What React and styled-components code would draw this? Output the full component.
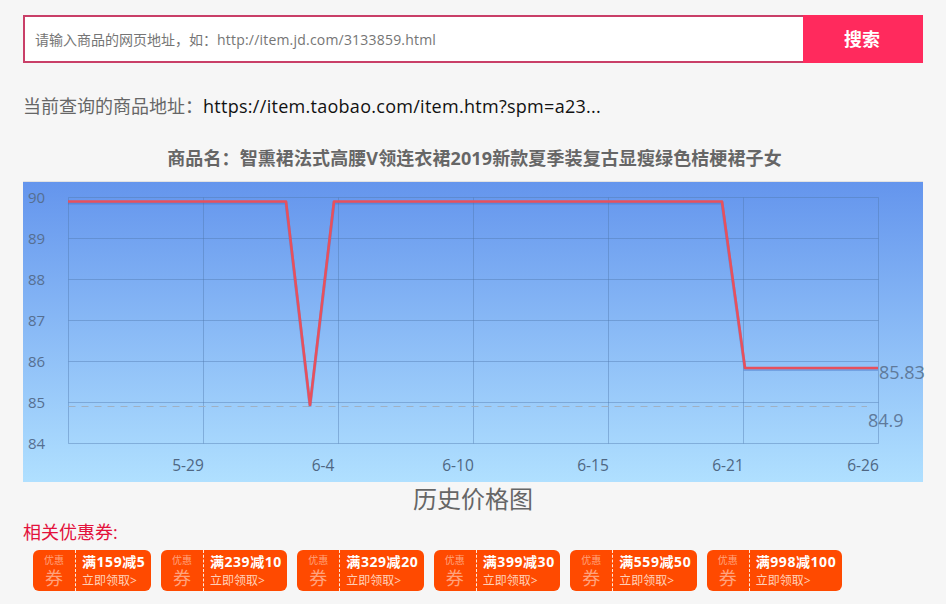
import React from 'react';
import styled, { createGlobalStyle } from 'styled-components';

const FONT = '"Open Sans", "Noto Sans CJK SC", sans-serif';

const GlobalStyle = createGlobalStyle`
  html, body {
    margin: 0;
    padding: 0;
    background: #f6f6f6;
    font-family: ${FONT};
  }
`;

const Page = styled.div`
  width: 900px;
  height: 589px;
  padding: 15px 23px 0;
  overflow: hidden;
`;

const SearchBar = styled.div`
  display: flex;
  height: 48px;
`;

const SearchInput = styled.div`
  flex: 1;
  display: flex;
  align-items: center;
  padding: 0 0 1px 10px;
  background: #fff;
  border: 2px solid #c93f68;
  border-right: none;
  font-size: 14px;
  color: #757575;
`;

const InputUrl = styled.span`
  letter-spacing: 0.2px;
`;

const SearchButton = styled.button`
  width: 120px;
  border: none;
  padding: 0 2px 2px 0;
  background: #ff2a5d;
  color: #fff;
  font-family: ${FONT};
  font-size: 18px;
  font-weight: 700;
`;

const AddressRow = styled.div`
  margin-top: 30px;
  height: 26px;
  line-height: 26px;
  font-size: 18px;
  color: #666;
  white-space: nowrap;
`;

const AddressLink = styled.span`
  color: #111;
  letter-spacing: 0.28px;
`;

const ProductName = styled.h1`
  margin: 27px 0 0;
  padding-left: 3px;
  height: 25px;
  line-height: 25px;
  text-align: center;
  font-size: 18px;
  font-weight: 700;
  letter-spacing: 0.1px;
  color: #666;
  white-space: nowrap;
`;

const ChartBox = styled.div`
  margin-top: 10px;
  height: 300px;
  border-top: 1px solid #e2e2e2;
  background: linear-gradient(#6495ed, #b0e0ff);
`;

const ChartSvg = styled.svg`
  display: block;
  overflow: visible;
`;

const ChartCaption = styled.div`
  height: 38px;
  line-height: 34px;
  text-align: center;
  font-size: 24px;
  color: #666;
`;

const CouponTitle = styled.div`
  height: 24px;
  line-height: 25px;
  font-size: 18px;
  color: #e3123c;
`;

const CouponList = styled.div`
  display: flex;
  gap: 10px;
  margin-top: 6px;
  padding-left: 10px;
`;

const Coupon = styled.div`
  display: flex;
  height: 41px;
  border-radius: 6px;
  background: #ff4a00;
  color: #fff;
`;

const CouponLeft = styled.div`
  width: 42px;
  flex: none;
  border-right: 1px dashed #ffe9dc;
  text-align: center;
  color: #ffa27c;
`;

const CouponSmall = styled.div`
  font-size: 10px;
  line-height: 12px;
  margin-top: 4px;
`;

const CouponBig = styled.div`
  font-size: 18px;
  line-height: 24px;
`;

const CouponRight = styled.div`
  padding: 2px 5.5px 0 6px;
  white-space: nowrap;
`;

const CouponAmount = styled.div`
  font-size: 14px;
  font-weight: 700;
  letter-spacing: 0.56px;
  line-height: 20px;
`;

const CouponAction = styled.div`
  font-size: 12px;
  line-height: 17px;
  color: #ffd0b8;
`;

const coupons = ['满159减5', '满239减10', '满329减20', '满399减30', '满559减50', '满998减100'];

// plot area, in chart coordinates
const LEFT = 45.5;
const RIGHT = 855.5;
const TOP = 15.5;
const BOTTOM = 261.5;
const rowYs = [0, 1, 2, 3, 4, 5, 6].map((i) => TOP + i * 41);
const colXs = [0, 1, 2, 3, 4, 5, 6].map((i) => LEFT + i * 135);
const yLabels = ['90', '89', '88', '87', '86', '85', '84'];
const xLabels = ['5-29', '6-4', '6-10', '6-15', '6-21', '6-26'];
const line = '45,19.5 263,19.5 287,223 311,19.5 699,19.5 722,186 855,186';

function PriceChart() {
  return (
    <ChartSvg width="900" height="300" viewBox="0 0 900 300" fontFamily={FONT}>
      <g stroke="#4f78ab" strokeOpacity="0.42" strokeWidth="1">
        {rowYs.map((y) => (
          <line key={y} x1={LEFT} x2={RIGHT} y1={y} y2={y} />
        ))}
        {colXs.map((x) => (
          <line key={x} x1={x} x2={x} y1={TOP} y2={BOTTOM} />
        ))}
      </g>
      <line x1={LEFT} x2={844} y1="224.5" y2="224.5" stroke="#9fb0c2" strokeDasharray="7 6" />
      <polyline points={line} fill="none" stroke="#3f6fc0" strokeOpacity="0.4" strokeWidth="3" transform="translate(0 1.5)" />
      <polyline points={line} fill="none" stroke="#e8505c" strokeWidth="2.6" strokeLinejoin="round" />
      <g fill="#566f91" fontSize="15">
        {yLabels.map((t, i) => (
          <text key={t} x="5" y={rowYs[i] + 5.5}>{t}</text>
        ))}
      </g>
      <g fill="#4f6783" fontSize="15.5" textAnchor="middle">
        {xLabels.map((t, i) => (
          <text key={t} x={colXs[i + 1] - 15.5} y="289">{t}</text>
        ))}
      </g>
      <g fill="#5f7a9b" fontSize="18">
        <text x="856" y="197">85.83</text>
        <text x="845" y="245">84.9</text>
      </g>
    </ChartSvg>
  );
}

export default function App() {
  return (
    <Page>
      <GlobalStyle />
      <SearchBar>
        <SearchInput>
          <span>请输入商品的网页地址，如：<InputUrl>http://item.jd.com/3133859.html</InputUrl></span>
        </SearchInput>
        <SearchButton>搜索</SearchButton>
      </SearchBar>
      <AddressRow>
        当前查询的商品地址：<AddressLink>https://item.taobao.com/item.htm?spm=a23...</AddressLink>
      </AddressRow>
      <ProductName>商品名：智熏裙法式高腰V领连衣裙2019新款夏季装复古显瘦绿色桔梗裙子女</ProductName>
      <ChartBox>
        <PriceChart />
      </ChartBox>
      <ChartCaption>历史价格图</ChartCaption>
      <CouponTitle>相关优惠券:</CouponTitle>
      <CouponList>
        {coupons.map((c) => (
          <Coupon key={c}>
            <CouponLeft>
              <CouponSmall>优惠</CouponSmall>
              <CouponBig>券</CouponBig>
            </CouponLeft>
            <CouponRight>
              <CouponAmount>{c}</CouponAmount>
              <CouponAction>立即领取&gt;</CouponAction>
            </CouponRight>
          </Coupon>
        ))}
      </CouponList>
    </Page>
  );
}
